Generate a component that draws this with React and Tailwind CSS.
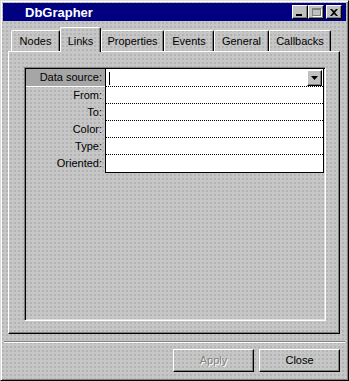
import React from 'react';

const font = "font-['Liberation_Sans',Arial,sans-serif]";
const dither =
  "bg-[#c6c6c6] [background-image:radial-gradient(#a9a9a9_0.6px,transparent_0.9px)] [background-size:4px_4px]";
const raised =
  'border border-t-white border-l-white border-r-black border-b-black shadow-[inset_-1px_-1px_0_#808080]';

const tabs = [
  { name: 'Nodes', w: 'w-[49px]' },
  { name: 'Links', w: 'w-[41px]', active: true },
  { name: 'Properties', w: 'w-[63px]' },
  { name: 'Events', w: 'w-[50px]' },
  { name: 'General', w: 'w-[55px]' },
  { name: 'Callbacks', w: 'w-[62px]' },
];

const fields = ['Data source:', 'From:', 'To:', 'Color:', 'Type:', 'Oriented:'];

function TitleButton({ children, gap }) {
  return (
    <div className={`${raised} bg-[#c0c0c0] w-[16px] h-[14px] flex items-center justify-center ${gap ? 'ml-[2px]' : ''}`}>
      {children}
    </div>
  );
}

function Tab({ tab }) {
  if (tab.active) {
    return (
      <div
        className={`${dither} ${tab.w} h-[25px] -mb-px relative z-10 border border-b-0 border-t-white border-l-white border-r-black rounded-t-[2px] shadow-[inset_-1px_0_0_#808080] flex justify-center pt-[7px]`}
      >
        <span className="text-[11px] leading-[13px] text-black whitespace-nowrap">{tab.name}</span>
      </div>
    );
  }
  return (
    <div
      className={`${tab.w} h-[21px] border border-b-0 border-t-white border-l-white border-r-black rounded-t-[2px] shadow-[inset_-1px_0_0_#808080] flex justify-center pt-[4px]`}
    >
      <span className="text-[11px] leading-[13px] text-black whitespace-nowrap">{tab.name}</span>
    </div>
  );
}

function Button({ label, disabled }) {
  return (
    <div className={`${raised} w-[81px] h-[23px] flex items-center justify-center`}>
      <span
        className={`text-[11px] leading-[13px] ${disabled ? 'text-[#808080] [text-shadow:1px_1px_0_#fff]' : 'text-black'}`}
      >
        {label}
      </span>
    </div>
  );
}

export default function App() {
  return (
    <div
      className={`${font} ${dither} w-[349px] h-[381px] p-[2px] flex flex-col border border-t-[#dfdfdf] border-l-[#dfdfdf] border-r-black border-b-black shadow-[inset_1px_1px_0_#fff,inset_-1px_-1px_0_#808080]`}
    >
      {/* title bar */}
      <div className="h-[18px] bg-[#000080] flex items-center pl-[22px] pr-[4px]">
        <span className="text-white font-bold text-[13px] leading-[15px] flex-1">DbGrapher</span>
        <TitleButton>
          <div className="w-[6px] h-[2px] bg-black mt-[6px] -ml-[2px]" />
        </TitleButton>
        <TitleButton>
          <div className="w-[9px] h-[8px] border border-t-2 border-[#808080] shadow-[1px_1px_0_#fff]" />
        </TitleButton>
        <TitleButton gap>
          <svg width="8" height="7" viewBox="0 0 8 7">
            <path d="M0 0h2l2 2 2-2h2L5 3.5 8 7H6L4 5 2 7H0l3-3.5z" fill="#000" />
          </svg>
        </TitleButton>
      </div>

      {/* tabs */}
      <div className="mt-[6px] h-[24px] ml-[8px] flex items-end">
        {tabs.map((t) => (
          <Tab key={t.name} tab={t} />
        ))}
      </div>

      {/* tab panel */}
      <div className={`${raised} ml-[5px] w-[332px] h-[283px] pl-[15px] pt-[15px]`}>
        <div className="w-[302px] h-[254px] p-[1px] border border-t-[#808080] border-l-[#808080] border-r-white border-b-white shadow-[inset_1px_1px_0_#000,inset_-1px_-1px_0_#dfdfdf]">
          <div className="flex">
            <div className="w-[79px] flex flex-col">
              {fields.map((f, i) => (
                <div
                  key={f}
                  className={`${i === 0 ? 'h-[18px] bg-[#a6a6a6] border-b border-white' : 'h-[17px]'} flex items-center justify-end pr-[3px]`}
                >
                  <span className="text-[11px] leading-[13px] text-black whitespace-nowrap">{f}</span>
                </div>
              ))}
            </div>
            <div className="w-[219px] bg-white border-l border-r border-b border-black flex flex-col">
              {fields.map((f, i) => (
                <div
                  key={f}
                  className={`${i === 0 ? 'h-[18px]' : 'h-[17px]'} ${i < fields.length - 1 ? 'border-b border-dotted border-black' : ''} flex items-start justify-between`}
                >
                  {i === 0 && (
                    <>
                      <div className="w-[1px] h-[13px] bg-black ml-[3px] mt-[3px]" />
                      <div className={`${raised} bg-[#c0c0c0] w-[15px] h-[16px] mt-[1px] mr-[1px] flex items-center justify-center`}>
                        <svg width="7" height="5" viewBox="0 0 7 5">
                          <path d="M0 0h7L3.5 4z" fill="#000" />
                        </svg>
                      </div>
                    </>
                  )}
                </div>
              ))}
            </div>
          </div>
        </div>
      </div>

      {/* separator */}
      <div className="mt-[7px] mx-[1px] h-[2px] border-t border-t-[#808080] border-b border-b-white" />

      {/* buttons */}
      <div className="mt-[6px] flex justify-end gap-[5px] pr-[6px]">
        <Button label="Apply" disabled />
        <Button label="Close" />
      </div>
    </div>
  );
}
